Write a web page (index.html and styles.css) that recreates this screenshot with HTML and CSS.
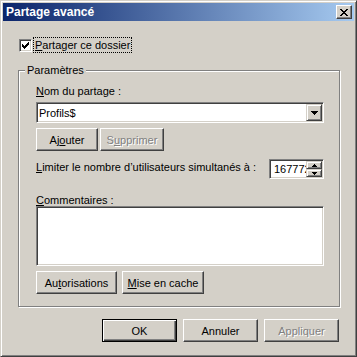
FILE: index.html
```html
<!DOCTYPE html>
<html lang="fr">
<head>
<meta charset="UTF-8" />
<meta name="viewport" content="width=device-width, initial-scale=1" />
<title>Partage avancé</title>
<link rel="stylesheet" href="styles.css">
</head>
<body>
<div class="window">
  <div class="titlebar">
    <span class="title">Partage avancé</span>
    <span class="close">
      <svg width="8" height="7" viewBox="0 0 8 7" shape-rendering="crispEdges"><path d="M0 0h2v1h-2zM6 0h2v1h-2zM1 1h2v1h-2zM5 1h2v1h-2zM2 2h4v1h-4zM3 3h2v1h-2zM2 4h4v1h-4zM1 5h2v1h-2zM5 5h2v1h-2zM0 6h2v1h-2zM6 6h2v1h-2z" fill="#000"/></svg>
    </span>
  </div>

  <div class="content">
    <div class="check-row">
      <span class="checkbox">
        <svg width="7" height="7" viewBox="0 0 7 7" shape-rendering="crispEdges"><path d="M6 0h1v1h-1zM5 1h2v1h-2zM0 2h1v1h-1zM4 2h3v1h-3zM0 3h2v1h-2zM3 3h3v1h-3zM0 4h5v1h-5zM1 5h3v1h-3zM2 6h1v1h-1z" fill="#000"/></svg>
      </span>
      <span class="focus"><u>P</u>artager ce dossier</span>
    </div>

    <div class="group">
      <span class="legend">Paramètres</span>

      <div class="field-label"><u>N</u>om du partage :</div>
      <div class="combo">
        <span class="combo-text">Profils$</span>
        <span class="drop">
          <svg width="7" height="4" viewBox="0 0 7 4" shape-rendering="crispEdges"><path d="M0 0h7v1h-7zM1 1h5v1h-5zM2 2h3v1h-3zM3 3h1v1h-1z" fill="#000"/></svg>
        </span>
      </div>

      <div class="btn-row tight">
        <button class="btn w-ajouter">Aj<u>o</u>uter</button>
        <button class="btn w-supprimer disabled">S<u>u</u>pprimer</button>
      </div>

      <div class="limit-row">
        <span class="limit-label"><u>L</u>imiter le nombre d’utilisateurs simultanés à :</span>
        <div class="spin">
          <span class="spin-text">16777216</span>
          <span class="spin-btns">
            <span class="spin-btn">
              <svg width="5" height="3" viewBox="0 0 5 3" shape-rendering="crispEdges"><path d="M2 0h1v1h-1zM1 1h3v1h-3zM0 2h5v1h-5z" fill="#000"/></svg>
            </span>
            <span class="spin-btn">
              <svg width="5" height="3" viewBox="0 0 5 3" shape-rendering="crispEdges"><path d="M0 0h5v1h-5zM1 1h3v1h-3zM2 2h1v1h-1z" fill="#000"/></svg>
            </span>
          </span>
        </div>
      </div>

      <div class="field-label comments"><u>C</u>ommentaires :</div>
      <div class="memo"></div>

      <div class="btn-row wide">
        <button class="btn w-autorisations">Au<u>t</u>orisations</button>
        <button class="btn w-cache"><u>M</u>ise en cache</button>
      </div>
    </div>

    <div class="footer">
      <button class="btn default">OK</button>
      <button class="btn">Annuler</button>
      <button class="btn disabled">Appliquer</button>
    </div>
  </div>
</div>
</body>
</html>
```

FILE: styles.css
```css
* { box-sizing: border-box; }
body { margin: 0; background: #d4d0c8; font-family: "Liberation Sans", Arial, sans-serif; font-size: 11px; color: #000; }

/* fenêtre classique */
.window { width: 357px; height: 357px; background: #d4d0c8; padding: 2px; display: flex; flex-direction: column;
  border: 1px solid; border-color: #d4d0c8 #404040 #404040 #d4d0c8;
  box-shadow: inset 1px 1px #fff, inset -1px -1px #808080; }

.titlebar { height: 18px; flex: none; display: flex; align-items: center; justify-content: space-between; padding: 0 2px 0 3px;
  background: linear-gradient(to right, #0a246a, #a6caf0); }
.title { color: #fff; font-weight: bold; font-size: 12px; line-height: 14px; }
.close { width: 16px; height: 14px; display: flex; align-items: center; justify-content: center; background: #d4d0c8;
  border: 1px solid; border-color: #fff #404040 #404040 #fff; box-shadow: inset -1px -1px #808080; }

.content { flex: 1; display: flex; flex-direction: column; padding: 16px 14px 0 15px; }

/* case à cocher */
.check-row { display: flex; align-items: center; height: 16px; margin-left: 1px; }
.checkbox { width: 13px; height: 13px; padding: 2px; background: #fff; display: flex;
  border: 1px solid; border-color: #808080 #fff #fff #808080;
  box-shadow: inset 1px 1px #404040, inset -1px -1px #d4d0c8; }
.focus { margin-left: 1px; padding: 0 1px; line-height: 14px; border: 1px dotted #000; }

/* cadre Paramètres */
.group { position: relative; margin-top: 17px; height: 237px; padding: 14px 15px 0 17px;
  border: 1px solid #808080; box-shadow: inset 1px 1px #fff, 1px 1px #fff; }
.legend { position: absolute; top: -7px; left: 6px; padding: 0 2px; background: #d4d0c8; line-height: 13px; }

.field-label { line-height: 13px; margin-bottom: 4px; }
.field-label.comments { margin-top: 15px; margin-bottom: 0; line-height: 12px; }

.sunken { border: 1px solid; border-color: #808080 #fff #fff #808080; box-shadow: inset 1px 1px #404040, inset -1px -1px #d4d0c8; }

.combo { height: 21px; padding: 1px; background: #fff; display: flex; align-items: stretch;
  border: 1px solid; border-color: #808080 #fff #fff #808080; box-shadow: inset 1px 1px #404040, inset -1px -1px #d4d0c8; }
.combo-text { flex: 1; display: flex; align-items: center; padding-left: 1px; }
.drop { width: 16px; display: flex; align-items: center; justify-content: center; background: #d4d0c8;
  border: 1px solid; border-color: #d4d0c8 #404040 #404040 #d4d0c8; box-shadow: inset 1px 1px #fff, inset -1px -1px #808080; }

/* boutons */
.btn-row { display: flex; }
.btn-row.tight { margin-top: 5px; gap: 2px; }
.btn-row.wide { margin-top: 5px; gap: 5px; }
.btn { width: 75px; height: 23px; padding: 0; font: inherit; color: #000; background: #d4d0c8;
  border: 1px solid; border-color: #fff #404040 #404040 #fff; box-shadow: inset -1px -1px #808080; }
.btn.disabled { color: #808080; text-shadow: 1px 1px #fff; }
.btn.default { border: 1px solid #000; box-shadow: inset 1px 1px #fff, inset -1px -1px #404040, inset -2px -2px #808080; }
.w-ajouter { width: 62px; }
.w-supprimer { width: 64px; }
.w-autorisations { width: 81px; }
.w-cache { width: 82px; }

/* limite */
.limit-row { display: flex; justify-content: space-between; align-items: flex-start; margin-top: 8px; }
.limit-label { line-height: 13px; margin-top: 2px; }
.spin { width: 55px; height: 20px; display: flex; background: #fff; padding: 1px; overflow: hidden;
  border: 1px solid; border-color: #808080 #fff #fff #808080; box-shadow: inset 1px 1px #404040, inset -1px -1px #d4d0c8; }
.spin-text { flex: 1; overflow: hidden; white-space: nowrap; line-height: 16px; padding-left: 3px; }
.spin-btns { width: 16px; flex: none; display: flex; flex-direction: column; }
.spin-btn { flex: 1; display: flex; align-items: center; justify-content: center; background: #d4d0c8;
  border: 1px solid; border-color: #d4d0c8 #404040 #404040 #d4d0c8; box-shadow: inset 1px 1px #fff, inset -1px -1px #808080; }

.memo { height: 60px; background: #fff;
  border: 1px solid; border-color: #808080 #fff #fff #808080; box-shadow: inset 1px 1px #404040, inset -1px -1px #d4d0c8; }

.footer { display: flex; justify-content: flex-end; gap: 6px; margin-top: 12px; padding-right: 1px; }
```
